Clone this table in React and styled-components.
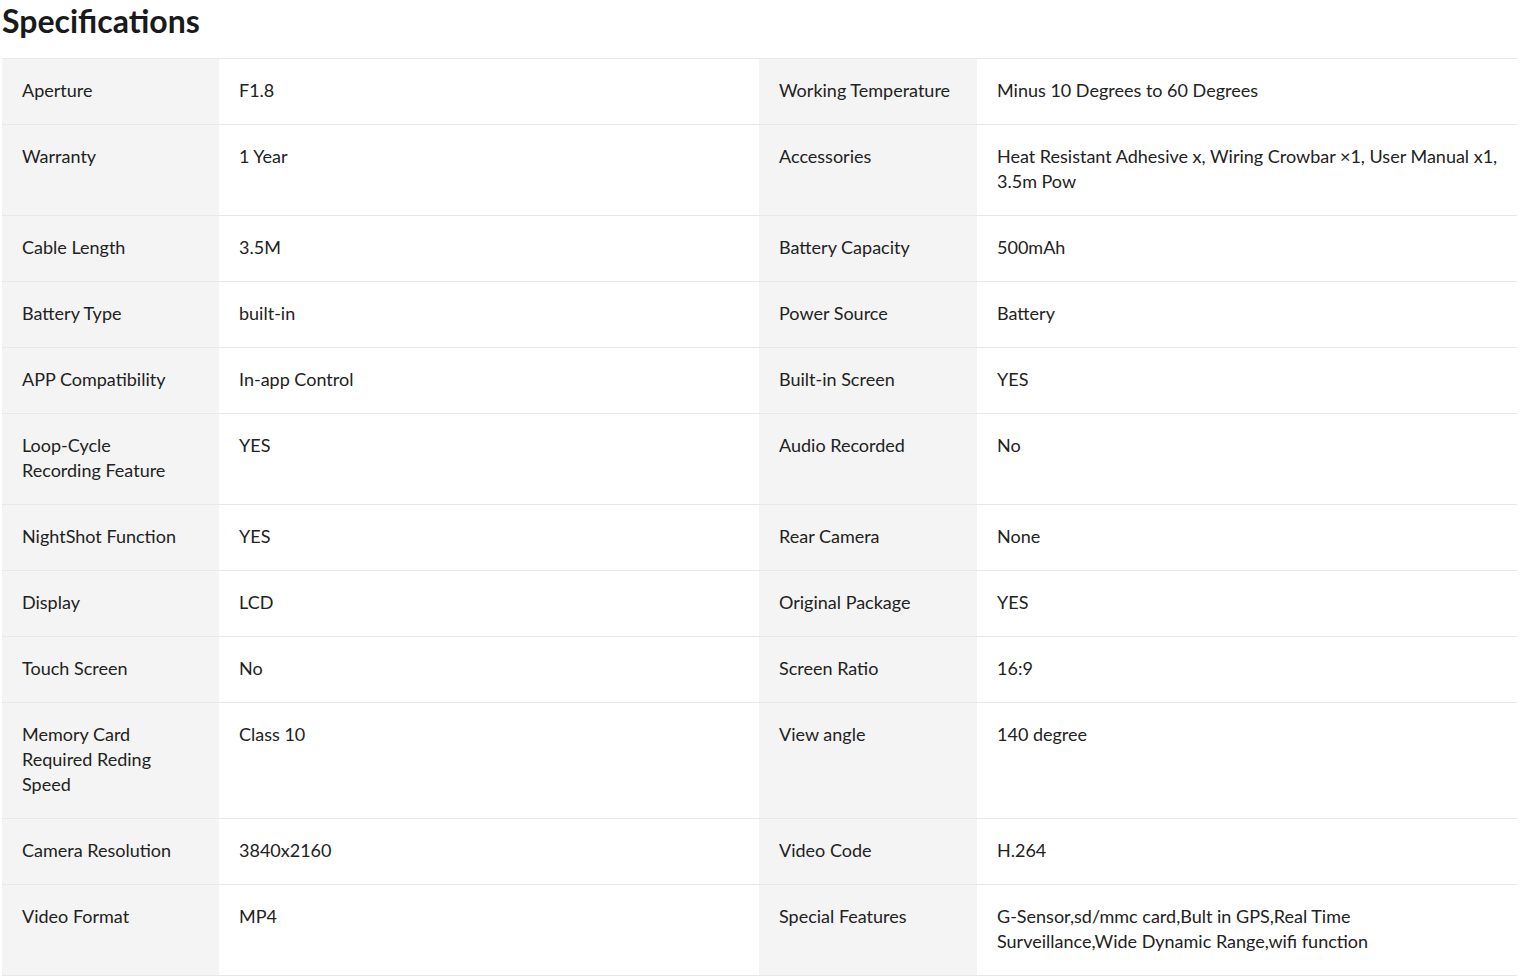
import React from 'react';
import styled, { createGlobalStyle } from 'styled-components';

// "\n" marks the places where the original wraps
const specs = [
  ['Aperture', 'F1.8', 'Working Temperature', 'Minus 10 Degrees to 60 Degrees'],
  ['Warranty', '1 Year', 'Accessories', 'Heat Resistant Adhesive x, Wiring Crowbar ×1, User Manual x1,\n3.5m Pow'],
  ['Cable Length', '3.5M', 'Battery Capacity', '500mAh'],
  ['Battery Type', 'built-in', 'Power Source', 'Battery'],
  ['APP Compatibility', 'In-app Control', 'Built-in Screen', 'YES'],
  ['Loop-Cycle\nRecording Feature', 'YES', 'Audio Recorded', 'No'],
  ['NightShot Function', 'YES', 'Rear Camera', 'None'],
  ['Display', 'LCD', 'Original Package', 'YES'],
  ['Touch Screen', 'No', 'Screen Ratio', '16:9'],
  ['Memory Card\nRequired Reding\nSpeed', 'Class 10', 'View angle', '140 degree'],
  ['Camera Resolution', '3840x2160', 'Video Code', 'H.264'],
  ['Video Format', 'MP4', 'Special Features', 'G-Sensor,sd/mmc card,Bult in GPS,Real Time\nSurveillance,Wide Dynamic Range,wifi function'],
];

function App() {
  return (
    <>
      <GlobalStyle />
      <Wrapper>
        <Heading>Specifications</Heading>
        <SpecGrid>
          {specs.map((row, index) => (
            <React.Fragment key={index}>
              <Cell $label>{row[0]}</Cell>
              <Cell>{row[1]}</Cell>
              <Cell $label>{row[2]}</Cell>
              <Cell>{row[3]}</Cell>
            </React.Fragment>
          ))}
        </SpecGrid>
      </Wrapper>
    </>
  );
}

const GlobalStyle = createGlobalStyle`
  body {
    margin: 0;
    background: #fff;
    font-family: Lato, "Open Sans", sans-serif;
    color: #222;
  }
`;

const Wrapper = styled.div`
  padding: 0 5px 0 2px;
`;

const Heading = styled.h2`
  margin: 0;
  padding: 0 0 17px;
  font-size: 32px;
  line-height: 41px;
  font-weight: 700;
  color: #1a1a1a;
`;

const SpecGrid = styled.div`
  display: grid;
  grid-template-columns: 217px 540px 218px 540px;
  border-top: 1px solid #e8e8e8;
`;

const Cell = styled.div`
  padding: 19px 20px 21px;
  font-size: 18px;
  line-height: 25px;
  white-space: pre;
  color: #222;
  background: ${(p) => (p.$label ? '#f4f4f4' : '#fff')};
  border-bottom: 1px solid #e8e8e8;
`;

export default App;
